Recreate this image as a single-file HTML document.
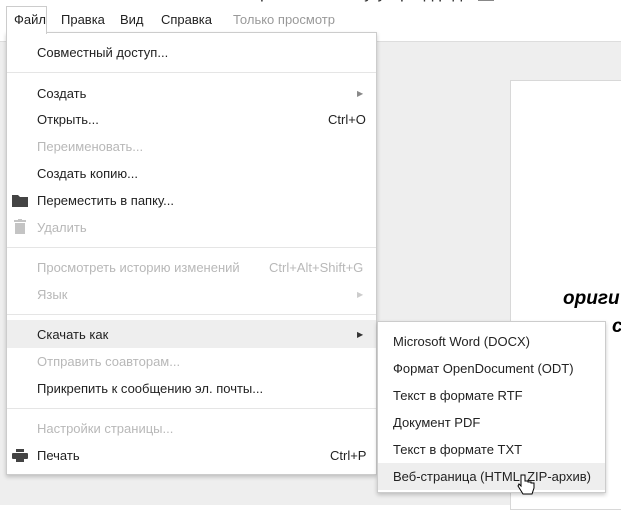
<!DOCTYPE html>
<html><head><meta charset="utf-8"><style>
*{margin:0;padding:0;box-sizing:border-box}
body{width:621px;height:505px;overflow:hidden;background:#fff;font-family:"Liberation Sans",Arial,sans-serif;font-size:13px;color:#222;position:relative}
.a{position:absolute;white-space:nowrap}
.gray{color:#b8b8b8}
.top{position:absolute;left:0;top:0;width:621px;height:42px;background:#fff;border-bottom:1px solid #ddd}
.bg{position:absolute;left:0;top:42px;width:621px;height:463px;background:#eeeeee}
.doc{position:absolute;left:510px;top:80px;width:120px;height:430px;background:#fff;border:1px solid #d8d8d8}
.menu{position:absolute;left:6px;top:32px;width:371px;height:443px;background:#fff;border:1px solid #ccc;box-shadow:0 2px 4px rgba(0,0,0,.2)}
.tab{position:absolute;left:6px;top:6px;width:41px;height:28px;background:#fff;border:1px solid #ccc;border-bottom:none;z-index:3}
.sep{position:absolute;left:7px;width:369px;height:1px;background:#e5e5e5}
.sub{position:absolute;left:377px;top:321px;width:229px;height:172px;background:#fff;border:1px solid #ccc;box-shadow:0 2px 4px rgba(0,0,0,.2)}
.hl{position:absolute;background:#eeeeee}
.arr{position:absolute;font-size:8px;color:#888}
</style></head><body>
<div class="top"></div>
<div class="a" style="left:260px;top:-17px;font-size:17px;color:#333">р  ем  ение в    ту   уп  ре д  р   д</div>
<div class="a" style="left:478px;top:-4px;width:16px;height:5px;background:#888"></div>
<div class="bg"></div>
<div class="doc"></div>
<div class="a" style="left:563px;top:288px;font-size:19px;font-weight:bold;font-style:italic;color:#000">ориги</div>
<div class="a" style="left:612px;top:316px;font-size:19px;font-weight:bold;font-style:italic;color:#000">с</div>
<div class="tab"></div>
<div class="a" style="left:14px;top:12px;z-index:4">Файл</div>
<div class="a" style="left:61px;top:12px">Правка</div>
<div class="a" style="left:120px;top:12px">Вид</div>
<div class="a" style="left:161px;top:12px">Справка</div>
<div class="a gray" style="left:233px;top:12px;color:#999">Только просмотр</div>
<div class="menu"></div>
<div class="hl" style="left:7px;top:320px;width:369px;height:28px"></div>
<div class="sep" style="top:72px"></div>
<div class="sep" style="top:247px"></div>
<div class="sep" style="top:314px"></div>
<div class="sep" style="top:408px"></div>
<div class="a" style="left:37px;top:45px">Совместный доступ...</div>
<div class="a" style="left:37px;top:86px">Создать</div><div class="arr" style="left:357px;top:89px">▶</div>
<div class="a" style="left:37px;top:112px">Открыть...</div><div class="a" style="left:328px;top:112px">Ctrl+O</div>
<div class="a gray" style="left:37px;top:139px">Переименовать...</div>
<div class="a" style="left:37px;top:166px">Создать копию...</div>
<svg class="a" style="left:12px;top:194px" width="16" height="13"><path d="M0 1h6l2 2h8v10H0z" fill="#444"/></svg>
<div class="a" style="left:37px;top:193px">Переместить в папку...</div>
<svg class="a" style="left:14px;top:219px" width="12" height="15"><rect x="0" y="1" width="12" height="2" fill="#c4c4c4"/><rect x="4" y="0" width="4" height="2" fill="#c4c4c4"/><rect x="1" y="4" width="10" height="11" fill="#c4c4c4"/></svg>
<div class="a gray" style="left:37px;top:220px">Удалить</div>
<div class="a gray" style="left:37px;top:260px">Просмотреть историю изменений</div><div class="a gray" style="left:269px;top:260px">Ctrl+Alt+Shift+G</div>
<div class="a gray" style="left:37px;top:287px">Язык</div><div class="arr" style="left:357px;top:290px;color:#ccc">▶</div>
<div class="a" style="left:37px;top:327px">Скачать как</div><div class="arr" style="left:357px;top:330px;color:#333">▶</div>
<div class="a gray" style="left:37px;top:354px">Отправить соавторам...</div>
<div class="a" style="left:37px;top:381px">Прикрепить к сообщению эл. почты...</div>
<div class="a gray" style="left:37px;top:421px">Настройки страницы...</div>
<svg class="a" style="left:12px;top:449px" width="16" height="13"><rect x="4" y="0" width="8" height="3" fill="#444"/><rect x="0" y="4" width="16" height="6" rx="1" fill="#444"/><rect x="4" y="9" width="8" height="4" fill="#444"/></svg>
<div class="a" style="left:37px;top:448px">Печать</div><div class="a" style="left:330px;top:448px">Ctrl+P</div>
<div class="sub"></div>
<div class="hl" style="left:378px;top:463px;width:227px;height:27px"></div>
<div class="a" style="left:393px;top:334px">Microsoft Word (DOCX)</div>
<div class="a" style="left:393px;top:361px">Формат OpenDocument (ODT)</div>
<div class="a" style="left:393px;top:388px">Текст в формате RTF</div>
<div class="a" style="left:393px;top:415px">Документ PDF</div>
<div class="a" style="left:393px;top:442px">Текст в формате TXT</div>
<div class="a" style="left:393px;top:469px">Веб-страница (HTML, ZIP-архив)</div>
<svg class="a" style="left:517px;top:474px" width="18" height="22"><path d="M4 1v11l-2-2-1 2 5 8h9l2-6v-5l-3 0v-1l-3 0v-1l-3 0V1z" fill="#fff" stroke="#000" stroke-width="1"/></svg>
</body></html>
